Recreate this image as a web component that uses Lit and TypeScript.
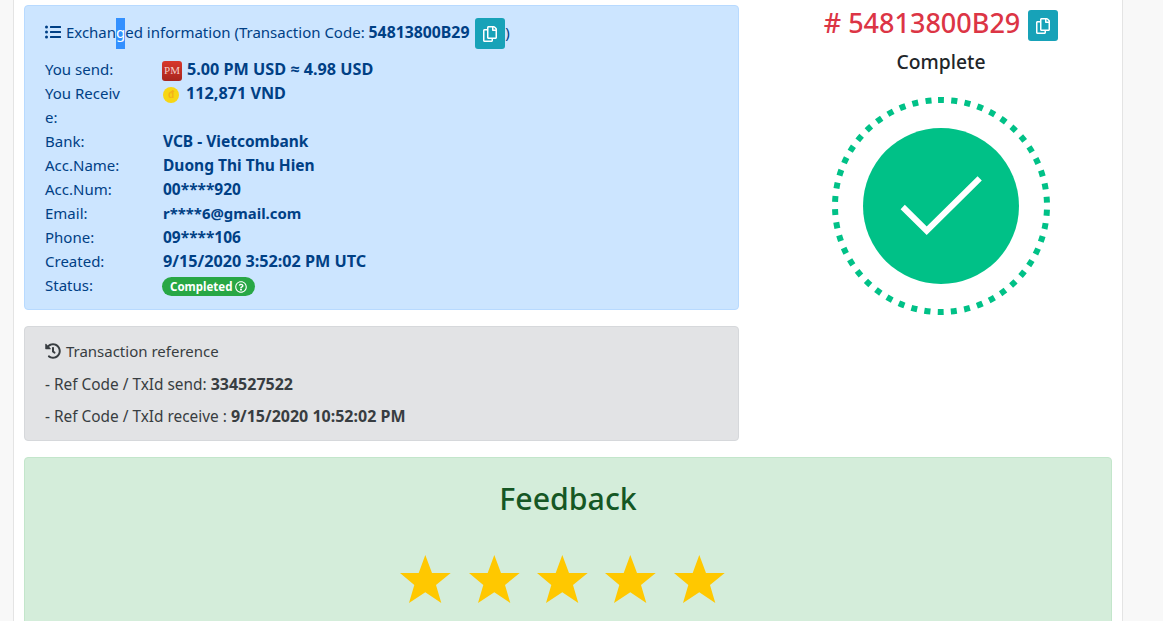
import { LitElement, html, css, svg } from 'lit';
import { customElement } from 'lit/decorators.js';

const LIST = 'M48 48a48 48 0 1 0 48 48 48 48 0 0 0-48-48zm0 160a48 48 0 1 0 48 48 48 48 0 0 0-48-48zm0 160a48 48 0 1 0 48 48 48 48 0 0 0-48-48zm448 16H176a16 16 0 0 0-16 16v32a16 16 0 0 0 16 16h320a16 16 0 0 0 16-16v-32a16 16 0 0 0-16-16zm0-320H176a16 16 0 0 0-16 16v32a16 16 0 0 0 16 16h320a16 16 0 0 0 16-16V80a16 16 0 0 0-16-16zm0 160H176a16 16 0 0 0-16 16v32a16 16 0 0 0 16 16h320a16 16 0 0 0 16-16v-32a16 16 0 0 0-16-16z';
const HISTORY = 'M504 255.531c.253 136.64-111.18 248.372-247.82 248.468-59.015.042-113.223-20.53-155.822-54.911-11.077-8.94-11.905-25.541-1.839-35.607l11.267-11.267c8.609-8.609 22.353-9.551 31.891-1.984C173.062 425.135 212.781 440 256 440c101.705 0 184-82.311 184-184 0-101.705-82.311-184-184-184-48.814 0-93.149 18.969-126.068 49.932l50.754 50.754c10.08 10.08 2.941 27.314-11.313 27.314H24c-8.837 0-16-7.163-16-16V38.627c0-14.254 17.234-21.393 27.314-11.314l49.372 49.372C129.209 34.136 189.552 8 256 8c136.81 0 247.747 110.78 248 247.531zm-180.912 78.784l9.823-12.63c8.138-10.463 6.253-25.542-4.21-33.679L288 256.349V152c0-13.255-10.745-24-24-24h-16c-13.255 0-24 10.745-24 24v135.651l65.409 50.874c10.463 8.137 25.541 6.253 33.679-4.21z';
const COPY = 'M433.941 65.941l-51.882-51.882A48 48 0 0 0 348.118 0H176c-26.51 0-48 21.49-48 48v48H48c-26.51 0-48 21.49-48 48v320c0 26.51 21.49 48 48 48h224c26.51 0 48-21.49 48-48v-48h80c26.51 0 48-21.49 48-48V99.882a48 48 0 0 0-14.059-33.941zM266 464H54a6 6 0 0 1-6-6V150a6 6 0 0 1 6-6h74v224c0 26.51 21.49 48 48 48h96v42a6 6 0 0 1-6 6zm128-96H182a6 6 0 0 1-6-6V54a6 6 0 0 1 6-6h106v88c0 13.255 10.745 24 24 24h88v202a6 6 0 0 1-6 6zm6-256h-64V48h9.632c1.591 0 3.117.632 4.243 1.757l48.368 48.368a6 6 0 0 1 1.757 4.243V112z';
const QUESTION = 'M256 8C119.043 8 8 119.083 8 256c0 136.997 111.043 248 248 248s248-111.003 248-248C504 119.083 392.957 8 256 8zm0 448c-110.532 0-200-89.431-200-200 0-110.495 89.472-200 200-200 110.491 0 200 89.471 200 200 0 110.491-89.431 200-200 200zm107.244-255.2c0 67.052-72.421 68.084-72.421 92.863V300c0 6.627-5.373 12-12 12h-45.647c-6.627 0-12-5.373-12-12v-8.659c0-35.745 27.1-50.034 47.579-61.516 17.561-9.845 28.324-16.541 28.324-29.579 0-17.246-21.999-28.693-39.784-28.693-23.189 0-33.894 10.977-48.942 29.969-4.057 5.12-11.46 6.071-16.666 2.124l-27.824-21.098c-5.107-3.872-6.251-11.066-2.644-16.363C184.846 131.491 214.94 112 261.794 112c49.071 0 101.45 38.304 101.45 88.8zM298 368c0 23.159-18.841 42-42 42s-42-18.841-42-42 18.841-42 42-42 42 18.841 42 42z';

const icon = (d: string, w: number, h: number, vb = '0 0 512 512') =>
  svg`<svg class="fa" width=${w} height=${h} viewBox=${vb} fill="currentColor"><path d=${d}></path></svg>`;

const copyBtn = () => html`<span class="copy">${icon(COPY, 14, 16, '0 0 448 512')}</span>`;

const rows = [
  ['Bank:', 'VCB - Vietcombank', ''],
  ['Acc.Name:', 'Duong Thi Thu Hien', ''],
  ['Acc.Num:', '00****920', ''],
  ['Email:', 'r****6@gmail.com', 'small'],
  ['Phone:', '09****106', ''],
  ['Created:', '9/15/2020 3:52:02 PM UTC', 'num'],
];

@customElement('app-root')
export class AppRoot extends LitElement {
  static styles = css`
    :host {
      display: block;
      height: 621px;
      overflow: hidden;
      background: #f8f8f8;
      font-family: 'Noto Sans', 'Open Sans', sans-serif;
      font-size: 15px;
      line-height: 24px;
    }
    .page {
      box-sizing: border-box;
      width: 1110px;
      height: 621px;
      margin-left: 13px;
      padding: 5px 10px 0;
      background: #fff;
      border: solid #e4e4e4;
      border-width: 0 1px;
      overflow: hidden;
    }
    .top {
      display: flex;
      gap: 31px;
    }
    .left {
      width: 715px;
      flex: none;
      display: flex;
      flex-direction: column;
      gap: 16px;
    }
    .box {
      box-sizing: border-box;
      border: 1px solid;
      border-radius: 4px;
      padding: 12px 20px;
    }
    .blue {
      background: #cce5ff;
      border-color: #b8daff;
      color: #004085;
    }
    .gray {
      background: #e2e3e5;
      border-color: #d6d8db;
      color: #383d41;
    }
    .gray p {
      height: 24px;
      margin: 0 0 8.5px;
      font-size: 15.4px;
    }
    .gray p:first-child {
      font-size: 15px;
    }
    .gray p:last-child {
      margin: 0;
    }
    .gray b {
      font-size: 16px;
    }
    .fa {
      vertical-align: -2px;
      margin-right: 1px;
    }
    .head {
      height: 31px;
      margin-bottom: 8px;
      line-height: 29px;
      white-space: nowrap;
    }
    .head b {
      font-size: 15.8px;
      margin-right: 2px;
    }
    .sel {
      display: inline-block;
      background: #3390ff;
      color: #fff;
      line-height: 29px;
      height: 31px;
      vertical-align: top;
    }
    .copy {
      display: inline-flex;
      align-items: center;
      justify-content: center;
      width: 30px;
      height: 31px;
      background: #17a2b8;
      border-radius: 3px;
      color: #fff;
      vertical-align: top;
    }
    .copy .fa {
      margin: 0;
    }
    .row {
      display: flex;
    }
    .label {
      width: 82px;
      margin-right: 36px;
      flex: none;
      word-break: break-all;
    }
    .val {
      font-size: 15.5px;
      font-weight: 700;
    }
    .num {
      font-size: 16.2px;
    }
    .small {
      font-size: 14.9px;
    }
    .pm {
      display: inline-flex;
      align-items: center;
      justify-content: center;
      width: 20px;
      height: 20px;
      margin: -4px 5px -4px -1px;
      vertical-align: middle;
      border-radius: 3px;
      background: linear-gradient(#d8372c, #a8261e);
      color: #f3d0c8;
      font: 11px/1 'Liberation Serif', serif;
    }
    .coin {
      display: inline-flex;
      align-items: center;
      justify-content: center;
      box-sizing: border-box;
      width: 16px;
      height: 16px;
      margin: -4px 7px -4px 0;
      vertical-align: middle;
      border-radius: 50%;
      background: #f7d614;
      color: #f3b21a;
      font: 700 10px/1 'Liberation Sans', sans-serif;
    }
    .badge {
      display: inline-flex;
      align-items: center;
      gap: 3px;
      height: 19px;
      margin-left: -1px;
      padding: 0 8px;
      border-radius: 10px;
      background: #28a745;
      color: #fff;
      font-size: 11.5px;
      font-weight: 700;
      line-height: 19px;
      vertical-align: middle;
      margin-block: -2px;
    }
    .badge .fa {
      vertical-align: 0;
      margin: 0;
    }
    .right {
      flex: 1;
      display: flex;
      flex-direction: column;
      align-items: center;
    }
    .code {
      display: flex;
      align-items: flex-start;
      gap: 8px;
      height: 31px;
      margin-top: 5px;
      color: #dc3545;
      font-size: 27px;
      font-weight: 500;
      line-height: 26px;
      white-space: nowrap;
    }
    .state {
      margin-top: 9px;
      font-size: 19.3px;
      font-weight: 500;
      color: #212529;
    }
    .ring {
      margin-top: 22px;
      display: block;
    }
    .feedback {
      margin-top: 16px;
      background: #d4edda;
      border: 1px solid #c3e6cb;
      border-radius: 4px;
      color: #155724;
      text-align: center;
      height: 240px;
    }
    h2 {
      margin: 19px 0 0;
      font-size: 30.3px;
      line-height: 44px;
      font-weight: 500;
    }
    .stars {
      display: flex;
      justify-content: center;
      gap: 17.3px;
      margin-top: 34px;
      padding-right: 11px;
    }
  `;

  render() {
    return html`
      <div class="page">
        <div class="top">
          <div class="left">
            <div class="box blue">
              <div class="head">
                ${icon(LIST, 16, 16)} Exchan<span class="sel">g</span>ed information (Transaction Code:
                <b>54813800B29</b> ${copyBtn()})
              </div>
              <div class="row">
                <div class="label">You send:</div>
                <div class="val num"><span class="pm">PM</span>5.00 PM USD ≈ 4.98 USD</div>
              </div>
              <div class="row">
                <div class="label">You Receive:</div>
                <div class="val num"><span class="coin">đ</span>112,871 VND</div>
              </div>
              ${rows.map(
                ([k, v, c]) => html`<div class="row">
                  <div class="label">${k}</div>
                  <div class="val ${c}">${v}</div>
                </div>`,
              )}
              <div class="row">
                <div class="label">Status:</div>
                <div><span class="badge">Completed ${icon(QUESTION, 12, 12)}</span></div>
              </div>
            </div>
            <div class="box gray">
              <p>${icon(HISTORY, 16, 16)} Transaction reference</p>
              <p>- Ref Code / TxId send: <b>334527522</b></p>
              <p>- Ref Code / TxId receive : <b>9/15/2020 10:52:02 PM</b></p>
            </div>
          </div>
          <div class="right">
            <div class="code"><span># 54813800B29</span>${copyBtn()}</div>
            <div class="state">Complete</div>
            <svg class="ring" width="220" height="220" viewBox="0 0 220 220">
              <circle
                cx="110"
                cy="110"
                r="106"
                fill="none"
                stroke="#00c187"
                stroke-width="6"
                stroke-dasharray="6 7.32"
                transform="rotate(-91.6 110 110)"
              ></circle>
              <circle cx="110" cy="110" r="78" fill="#00c187"></circle>
              <polyline
                points="71.7,111 95.7,134.7 148.7,82.3"
                fill="none"
                stroke="#fff"
                stroke-width="6"
              ></polyline>
            </svg>
          </div>
        </div>
        <div class="feedback">
          <h2>Feedback</h2>
          <div class="stars">
            ${[0, 1, 2, 3, 4].map(
              () => html`<svg width="51" height="48" viewBox="0 0 51 48">
                <polygon
                  fill="#ffc800"
                  points="25.3,0 32,18 50.7,18 36,30 41.3,48 25.3,37.3 9,48 14.3,30 0,18 18.7,18"
                ></polygon>
              </svg>`,
            )}
          </div>
        </div>
      </div>
    `;
  }
}
